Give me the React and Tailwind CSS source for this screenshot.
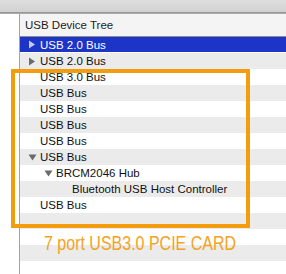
import React from "react";

const rows = [
  { label: "USB 2.0 Bus", level: 0, arrow: "right", selected: true },
  { label: "USB 2.0 Bus", level: 0, arrow: "right" },
  { label: "USB 3.0 Bus", level: 0 },
  { label: "USB Bus", level: 0 },
  { label: "USB Bus", level: 0 },
  { label: "USB Bus", level: 0 },
  { label: "USB Bus", level: 0 },
  { label: "USB Bus", level: 0, arrow: "down" },
  { label: "BRCM2046 Hub", level: 1, arrow: "down" },
  { label: "Bluetooth USB Host Controller", level: 2 },
  { label: "USB Bus", level: 0 },
  { label: "", level: 0 },
  { label: "", level: 0 },
  { label: "", level: 0 },
  { label: "", level: 0 },
];

const indent = ["pl-[8px]", "pl-[24px]", "pl-[40px]"];

function Arrow({ dir, selected }) {
  const fill = selected ? "#c3c9ee" : "#6b6b6b";
  if (dir === "right") {
    return (
      <svg width="8" height="9" viewBox="0 0 8 9">
        <path d="M1 0.5 L7 4.5 L1 8.5 Z" fill={fill} />
      </svg>
    );
  }
  return (
    <svg width="9" height="7" viewBox="0 0 9 7">
      <path d="M0.5 0.5 L8.5 0.5 L4.5 6.5 Z" fill={fill} />
    </svg>
  );
}

export default function App() {
  return (
    <div
      className="relative w-[286px] h-[274px] overflow-hidden bg-white"
      style={{ fontFamily: '"Liberation Sans", Arial, sans-serif' }}
    >
      <div className="h-[12px] bg-gradient-to-b from-[#dedede] to-[#d2d2d2]" />
      <div className="h-[2px] bg-gradient-to-b from-[#8c8c8c] to-[#b4b4b4]" />

      <div className="flex">
        <div className="w-[19px] shrink-0 bg-white" />
        <div className="flex-1 border-l border-[#a3a3a3]">
          <div className="h-[23px] leading-[23px] bg-[#f4f4f4] border-b border-[#8d8d8d] pl-[5px] text-[11.5px] text-[#1d1d1d]">
            USB Device Tree
          </div>
          {rows.map((r, i) => (
            <div
              key={i}
              className={
                "flex items-center h-4 leading-4 text-[11.5px] whitespace-nowrap " +
                indent[r.level] +
                " " +
                (r.selected
                  ? "bg-[#1c35c6] text-white border-b border-white"
                  : i % 2 === 0
                  ? "bg-white text-[#111]"
                  : "bg-[#ebebeb] text-[#111]")
              }
            >
              <span className="w-[12px] shrink-0 flex items-center">
                {r.arrow && <Arrow dir={r.arrow} selected={r.selected} />}
              </span>
              <span>{r.label}</span>
            </div>
          ))}
        </div>
      </div>

      {/* annotation drawn over the screenshot */}
      <div className="absolute left-[11px] top-[69px] w-[239px] h-[159px] border-4 border-[#f39c0e]" />
      <div className="absolute left-[44px] top-[233px] text-[20px] leading-[20px] text-[#f5a21f] whitespace-nowrap origin-left scale-x-[0.8]">
        7 port USB3.0 PCIE CARD
      </div>
    </div>
  );
}
